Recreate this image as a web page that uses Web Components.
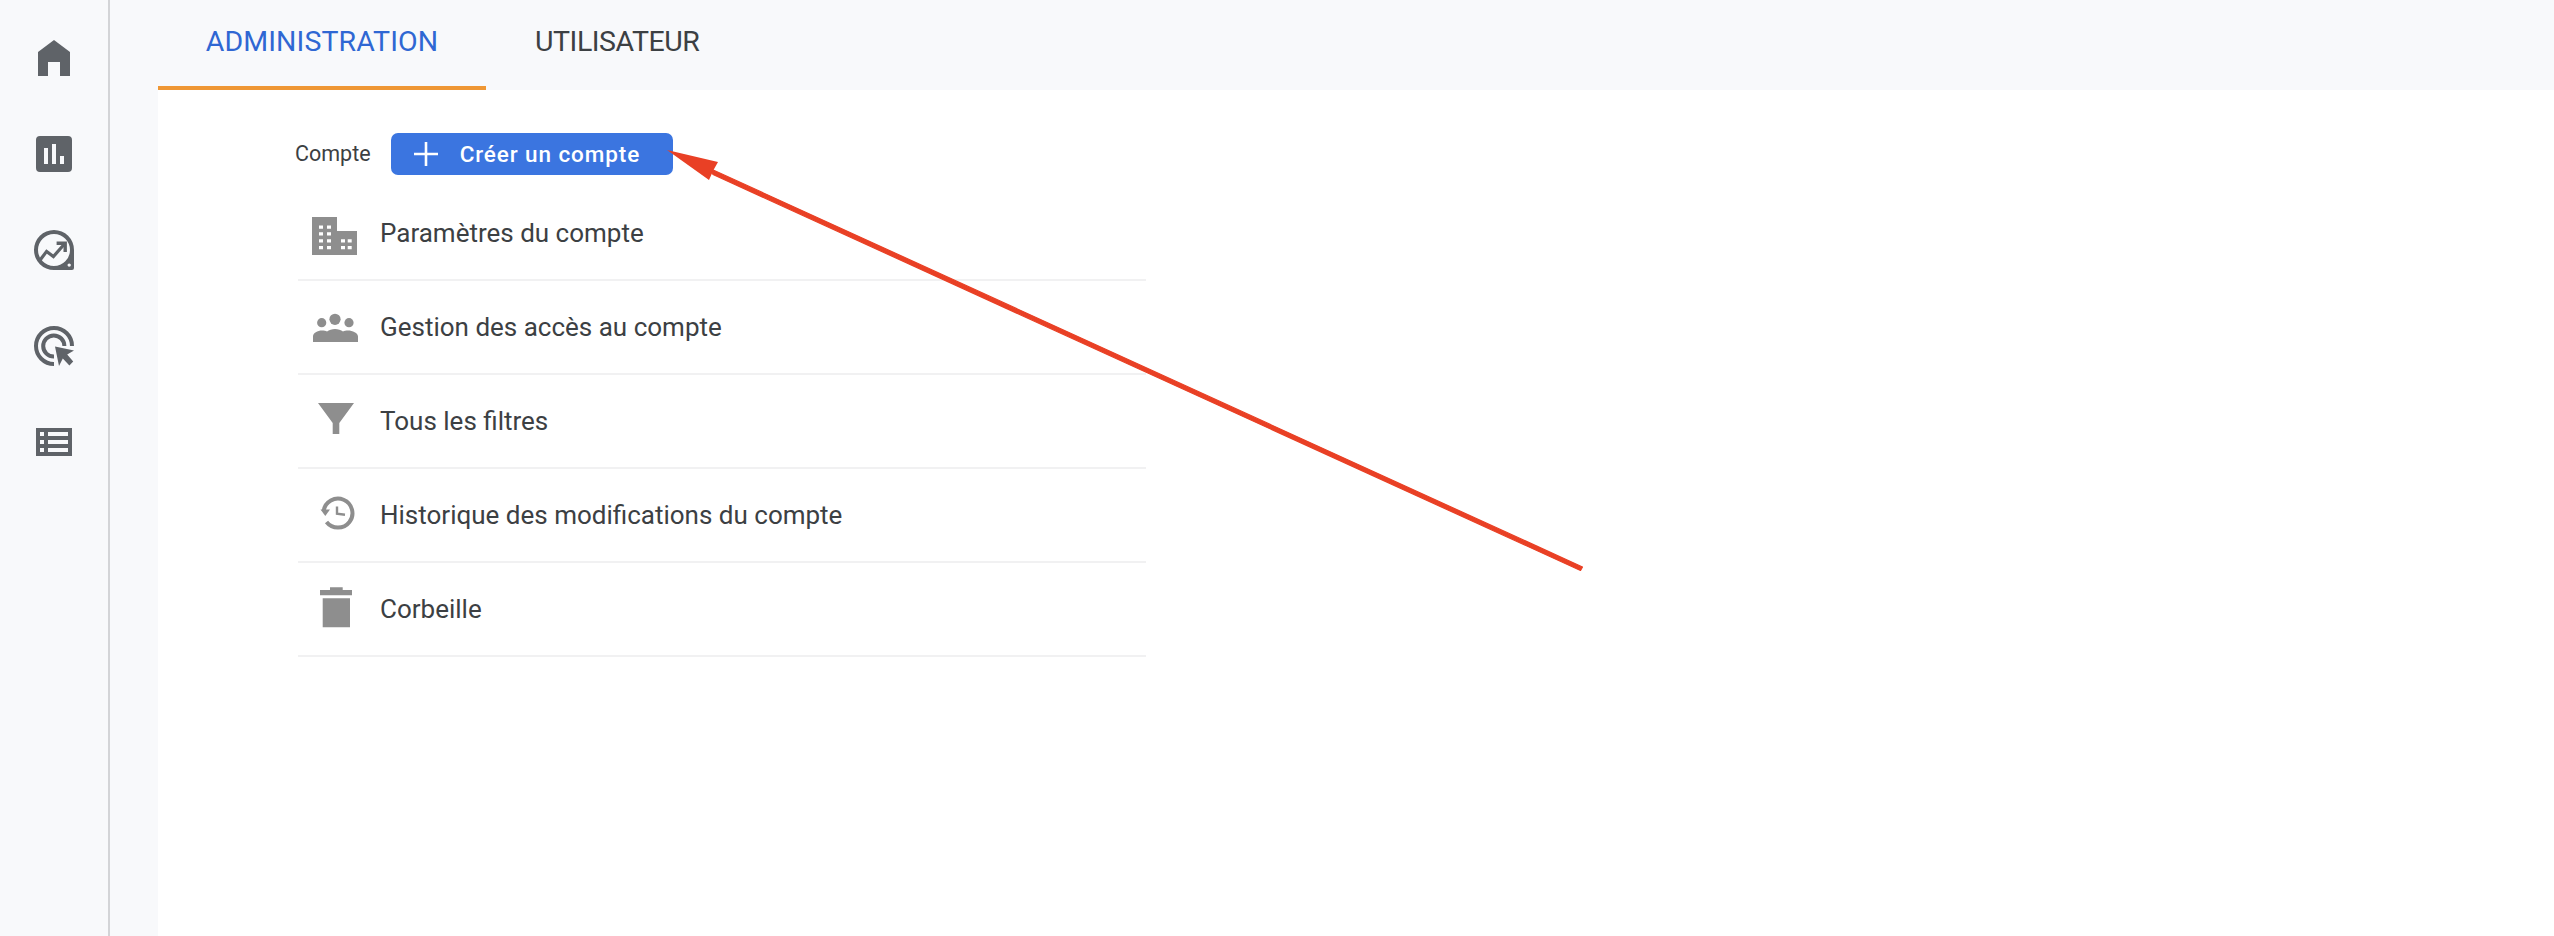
<!DOCTYPE html>
<html lang="fr">
<head>
<meta charset="utf-8">
<title>Administration</title>
<style>
  html, body { margin: 0; height: 100%; background: #f8f9fb; }
  body { font-family: Roboto, "Liberation Sans", sans-serif; overflow: hidden; }
</style>
</head>
<body>
<admin-page>
  <rail-nav slot="rail"></rail-nav>
  <admin-tabs slot="tabs">
    <admin-tab active width="328">ADMINISTRATION</admin-tab>
    <admin-tab>UTILISATEUR</admin-tab>
  </admin-tabs>
  <account-head>
    Compte
    <create-button slot="action">Créer un compte</create-button>
  </account-head>
  <nav-row icon="building">Paramètres du compte</nav-row>
  <nav-row icon="people">Gestion des accès au compte</nav-row>
  <nav-row icon="filter">Tous les filtres</nav-row>
  <nav-row icon="history">Historique des modifications du compte</nav-row>
  <nav-row icon="trash">Corbeille</nav-row>
</admin-page>
<call-arrow></call-arrow>

<script>
class AdminPage extends HTMLElement {
  constructor() {
    super();
    this.attachShadow({ mode: 'open' });
  }

  connectedCallback() {
    this.shadowRoot.innerHTML = `
      <style>
        :host { display: flex; width: 100%; height: 936px; background: #f8f9fb; }
        .main { flex: 1; margin-left: 48px; display: flex; flex-direction: column; min-width: 0; }
        .content { flex: 1; background: #fff; padding: 43px 0 0 137px; }
      </style>
      <slot name="rail"></slot>
      <div class="main">
        <slot name="tabs"></slot>
        <div class="content">
          <slot></slot>
        </div>
      </div>
    `;
  }
}

const RAIL_ICONS = [
  '<path fill-rule="evenodd" d="M12 3l8 6v12h-5v-7H9v7H4V9z"/>',
  '<path fill-rule="evenodd" d="M5 3h14a2 2 0 012 2v14a2 2 0 01-2 2H5a2 2 0 01-2-2V5a2 2 0 012-2zM7 9v8h2V9zM11 7v10h2V7zM15 13v4h2v-4z"/>',
  `<path fill-rule="evenodd" d="M12 2a10 10 0 00-10 10 10 10 0 0010 10h9a1 1 0 001-1v-9A10 10 0 0012 2zm0 2a8 8 0 110 16 8 8 0 010-16zm7.6 14.7a.85.85 0 100 1.7.85.85 0 000-1.7z"/>
   <path fill="none" stroke="currentColor" stroke-width="1.6" d="M4.6 17.6l3.7-4.9 3.4 2.6 5.4-6.2"/>
   <path fill="none" stroke="currentColor" stroke-width="1.7" d="M13.3 8.6h4.3V13"/>`,
  `<path fill="none" stroke="currentColor" stroke-width="2" d="M21 12A9 9 0 1012 21"/>
   <path fill="none" stroke="currentColor" stroke-width="2" d="M17.2 12A5.3 5.3 0 1012 17.3"/>
   <path d="M12.5 12.3l9.5 2-3.4 1.9 3 3.6-1.9 1.9-3.3-3.4-1.9 3.7z" stroke="#f8f9fb" stroke-width="1.2" paint-order="stroke"/>`,
  '<path fill-rule="evenodd" d="M3 5h18v14H3zM5 7v2h2V7zM9 7v2h10V7zM5 11v2h2v-2zM9 11v2h10v-2zM5 15v2h2v-2zM9 15v2h10v-2z"/>'
];

class RailNav extends HTMLElement {
  constructor() {
    super();
    this.attachShadow({ mode: 'open' });
  }

  connectedCallback() {
    const items = RAIL_ICONS.map((icon) => `<div class="item"><svg viewBox="0 0 24 24" width="48" height="48" fill="currentColor">${icon}</svg></div>`).join('');
    this.shadowRoot.innerHTML = `
      <style>
        :host { display: block; flex: none; box-sizing: border-box; width: 110px; height: 100%; padding-top: 10px; border-right: 2px solid #d3d4d7; color: #5f6368; }
        .item { height: 96px; display: flex; align-items: center; justify-content: center; }
      </style>
      ${items}
    `;
  }
}

class AdminTabs extends HTMLElement {
  constructor() {
    super();
    this.attachShadow({ mode: 'open' });
    this.shadowRoot.innerHTML = `
      <style>
        :host { display: flex; height: 90px; flex: none; }
      </style>
      <slot></slot>
    `;
  }
}

class AdminTab extends HTMLElement {
  constructor() {
    super();
    this.attachShadow({ mode: 'open' });
  }

  connectedCallback() {
    const width = this.getAttribute('width');
    this.shadowRoot.innerHTML = `
      <style>
        :host { display: flex; box-sizing: border-box; height: 90px; padding: 0 49px 2px; align-items: center; justify-content: center;
          font: 400 28.5px/1 Roboto, "Liberation Sans", sans-serif; letter-spacing: -.45px; color: #3c4043; border-bottom: 4px solid transparent; ${width ? `width: ${width}px;` : ''} }
        :host([active]) { color: #2f67d3; border-bottom-color: #ef9734; letter-spacing: .1px; }
      </style>
      <slot></slot>
    `;
  }
}

class AccountHead extends HTMLElement {
  constructor() {
    super();
    this.attachShadow({ mode: 'open' });
    this.shadowRoot.innerHTML = `
      <style>
        :host { display: flex; align-items: center; gap: 20px; height: 42px; margin-bottom: 12px;
          font: 400 21.5px/1 Roboto, "Liberation Sans", sans-serif; color: #3c4043; }
      </style>
      <slot></slot>
      <slot name="action"></slot>
    `;
  }
}

class CreateButton extends HTMLElement {
  constructor() {
    super();
    this.attachShadow({ mode: 'open' });
    this.shadowRoot.innerHTML = `
      <style>
        :host { display: flex; box-sizing: border-box; align-items: center; width: 282px; height: 42px; padding-left: 22px; gap: 21px;
          background: #3b75e0; border-radius: 7px; color: #fff; font: 500 22.5px/1 Roboto, "Liberation Sans", sans-serif; letter-spacing: .9px; }
        svg { flex: none; }
      </style>
      <svg width="26" height="26" viewBox="0 0 26 26"><path d="M13 1v24M1 13h24" stroke="#fff" stroke-width="2.6" fill="none"/></svg>
      <slot></slot>
    `;
  }
}

const ROW_ICONS = {
  building: `<path fill-rule="evenodd" d="M1 9h25v14h20v24H1zM8 17.5v3.2h4v-3.2zM16 17.5v3.2h4v-3.2zM8 24.3v3.2h4v-3.2zM16 24.3v3.2h4v-3.2zM8 31.2v3.2h4v-3.2zM16 31.2v3.2h4v-3.2zM8 38v3.2h4V38zM16 38v3.2h4V38zM30 31.2v3.2h4v-3.2zM36.7 31.2v3.2h4v-3.2zM30 38v3.2h4V38zM36.7 38v3.2h4V38z"/>`,
  people: `<circle cx="24" cy="17.3" r="5.6"/><circle cx="10.7" cy="20.7" r="4.6"/><circle cx="38" cy="20.7" r="4.6"/>
    <path d="M2 40v-5.5c0-3.6 4.6-6 9-6 2 0 3.8.4 5 1 2-1.6 5-2.5 8-2.5s6 .9 8 2.500c1.300-.6 3-1 5-1 4.400 0 10 2.400 10 6V40z"/>`,
  filter: '<path d="M7 7h36L28.3 27v11h-6.6V27z"/>',
  history: `<path fill="none" stroke="currentColor" stroke-width="4" d="M12.6 21A14.500 14.500 0 1115.500 32"/>
    <path d="M9.500 19.500h9.500l-4.700 6.500z"/><path fill="none" stroke="currentColor" stroke-width="2.400" d="M26 16.500v7.300l8 .9"/>`,
  trash: '<path d="M19 3.300h12.700V6H41v5.300H9V6h10zM11.700 14.300H39v29H11.700z"/>'
};

class NavRow extends HTMLElement {
  constructor() {
    super();
    this.attachShadow({ mode: 'open' });
  }

  connectedCallback() {
    const icon = ROW_ICONS[this.getAttribute('icon')];
    this.shadowRoot.innerHTML = `
      <style>
        :host { display: flex; box-sizing: border-box; align-items: center; width: 848px; height: 94px; margin-left: 3px; padding: 0 0 0 13px; gap: 21px;
          border-bottom: 2px solid #f1f1f2; font: 400 26px/1 Roboto, "Liberation Sans", sans-serif; color: #3c4043; }
        svg { flex: none; color: #8e8e8e; filter: blur(.6px); margin-top: -2px; }
      </style>
      <svg width="48" height="48" viewBox="0 0 48 48" fill="currentColor">${icon}</svg>
      <slot></slot>
    `;
  }
}

// annotation drawn over the page, tip on the button's right edge
class CallArrow extends HTMLElement {
  constructor() {
    super();
    this.attachShadow({ mode: 'open' });
    this.shadowRoot.innerHTML = `
      <style>
        :host { position: absolute; left: 0; top: 0; pointer-events: none; }
        svg { display: block; }
      </style>
      <svg width="2554" height="936" viewBox="0 0 2554 936">
        <path d="M667 150L718 162 713.500 170 709 180z" fill="#e94025"/>
        <path d="M711 169L713 174.500 1580.500 570.500 1582.500 567z" fill="#e94025" stroke="#e94025" stroke-width="1.200" stroke-linejoin="round"/>
      </svg>
    `;
  }
}

customElements.define('admin-page', AdminPage);
customElements.define('rail-nav', RailNav);
customElements.define('admin-tabs', AdminTabs);
customElements.define('admin-tab', AdminTab);
customElements.define('account-head', AccountHead);
customElements.define('create-button', CreateButton);
customElements.define('nav-row', NavRow);
customElements.define('call-arrow', CallArrow);
</script>
</body>
</html>
